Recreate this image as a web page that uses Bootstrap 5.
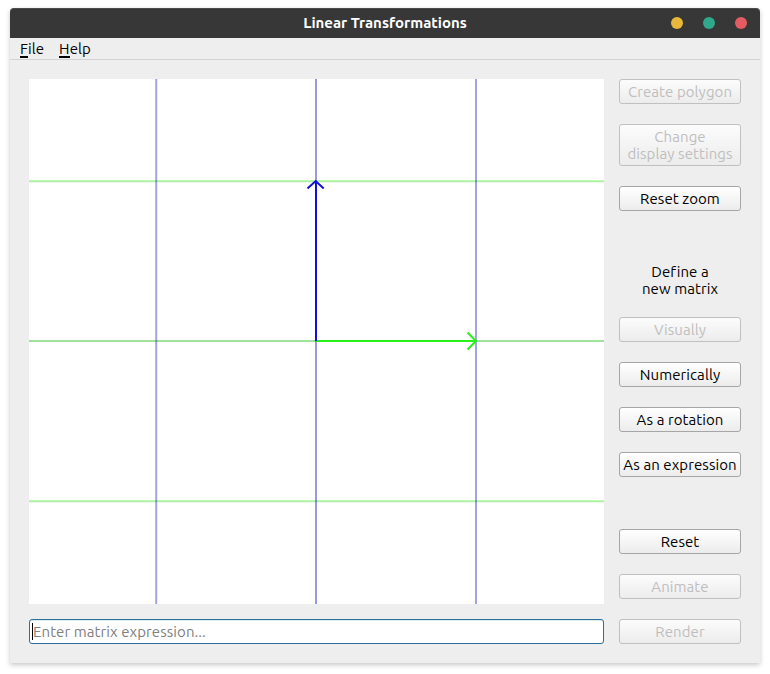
<!DOCTYPE html>
<html lang="en">
<head>
<meta charset="utf-8">
<title>Linear Transformations</title>
<link href="https://cdn.jsdelivr.net/npm/bootstrap@5.3.0/dist/css/bootstrap.min.css" rel="stylesheet">
<style>
body{background:#fff;font-family:Ubuntu,"Noto Sans",sans-serif;font-size:15px;line-height:17px;letter-spacing:.08px;font-variant-ligatures:none;color:#000;width:770px;height:674px;padding:8px 10px 11px;overflow:hidden}
.app-window{height:655px;background:#eee;border-radius:4px 4px 0 0;box-shadow:0 2px 5px rgba(0,0,0,.22)}
.titlebar{height:30px;background:#373737;border-top:1px solid #4c4c4c;border-radius:4px 4px 0 0;color:#fff;font-weight:700;letter-spacing:0;display:grid;grid-template-columns:1fr auto 1fr;padding-bottom:1px}
.window-title{padding-bottom:2px}
.window-controls{gap:20px;padding-right:13px}
.dot{width:12px;height:12px;border-radius:50%}
.dot-min{background:#e9b73a}.dot-max{background:#2fa88c}.dot-close{background:#e45c62}
.menubar{height:22px;border-bottom:1px solid #d3d3d3;padding-left:10px;gap:15px}
.menubar u{text-decoration:none;display:inline-block;line-height:17px;box-shadow:0 1px #000,inset 0 -1px #000}
.workspace{display:grid;grid-template-columns:575px 122px;column-gap:15px;padding:19px 19px 0}
.plot{width:575px;height:525px;background:#fff}
.entry{margin-top:15px;height:25px;border:1px solid #2c6f9c;border-radius:3px;background:#fff;padding:0 2px;line-height:23px;color:#808080;box-shadow:inset 0 1px 0 #dcebeb}
.caret{width:1px;height:17px;background:#000}
.tool{height:25px;padding:0;border:1px solid #a6a6a6;border-radius:3px;background:linear-gradient(#fff,#ececec);color:#000;font-size:15px;line-height:17px;letter-spacing:.08px;white-space:nowrap}
.tool:disabled{opacity:1;border-color:#c0c0c0;background:linear-gradient(#fcfcfc,#ececec);color:#bebebe}
.tool-tall{height:42px}
.top-tools,.define,.run{gap:20px}
.define{margin-top:52px}
.define p{margin:0}
.run{margin-top:52px}
</style>
</head>
<body>
<main class="app-window">
<header class="titlebar align-items-center">
<span></span><span class="window-title">Linear Transformations</span>
<div class="window-controls d-flex justify-content-end"><span class="dot dot-min"></span><span class="dot dot-max"></span><span class="dot dot-close"></span></div>
</header>
<nav class="menubar d-flex align-items-center"><span><u>F</u>ile</span><span><u>H</u>elp</span></nav>
<div class="workspace">
<section>
<svg class="plot d-block" viewBox="0 0 575 525" fill="none" stroke-width="2">
<g stroke="#aaf2a0"><path d="M0 102.3H575M0 422.3H575"/><path stroke="#a0e29a" d="M0 262H575"/></g>
<g stroke="#0000b4" stroke-opacity=".36"><path d="M127.2 0V525M447 0V525"/><path stroke-opacity=".4" d="M287 0V525"/></g>
<path stroke="#26f21a" d="M287 262H447M438.5 253.5L447 262L438.5 270.5"/>
<path stroke="#1010d8" d="M287 262V102M278.5 109.5L286.7 102L294.7 109.5"/>
</svg>
<div class="entry d-flex align-items-center"><span class="caret"></span><span>Enter matrix expression...</span></div>
</section>
<aside class="d-flex flex-column">
<div class="top-tools d-flex flex-column">
<button class="btn tool" disabled>Create polygon</button>
<button class="btn tool tool-tall" disabled>Change<br>display settings</button>
<button class="btn tool">Reset zoom</button>
</div>
<div class="define d-flex flex-column text-center">
<p>Define a<br>new matrix</p>
<button class="btn tool" disabled>Visually</button>
<button class="btn tool">Numerically</button>
<button class="btn tool">As a rotation</button>
<button class="btn tool">As an expression</button>
</div>
<div class="run d-flex flex-column">
<button class="btn tool">Reset</button>
<button class="btn tool" disabled>Animate</button>
<button class="btn tool" disabled>Render</button>
</div>
</aside>
</div>
</main>
<script src="https://cdn.jsdelivr.net/npm/bootstrap@5.3.0/dist/js/bootstrap.bundle.min.js"></script>
</body>
</html>
